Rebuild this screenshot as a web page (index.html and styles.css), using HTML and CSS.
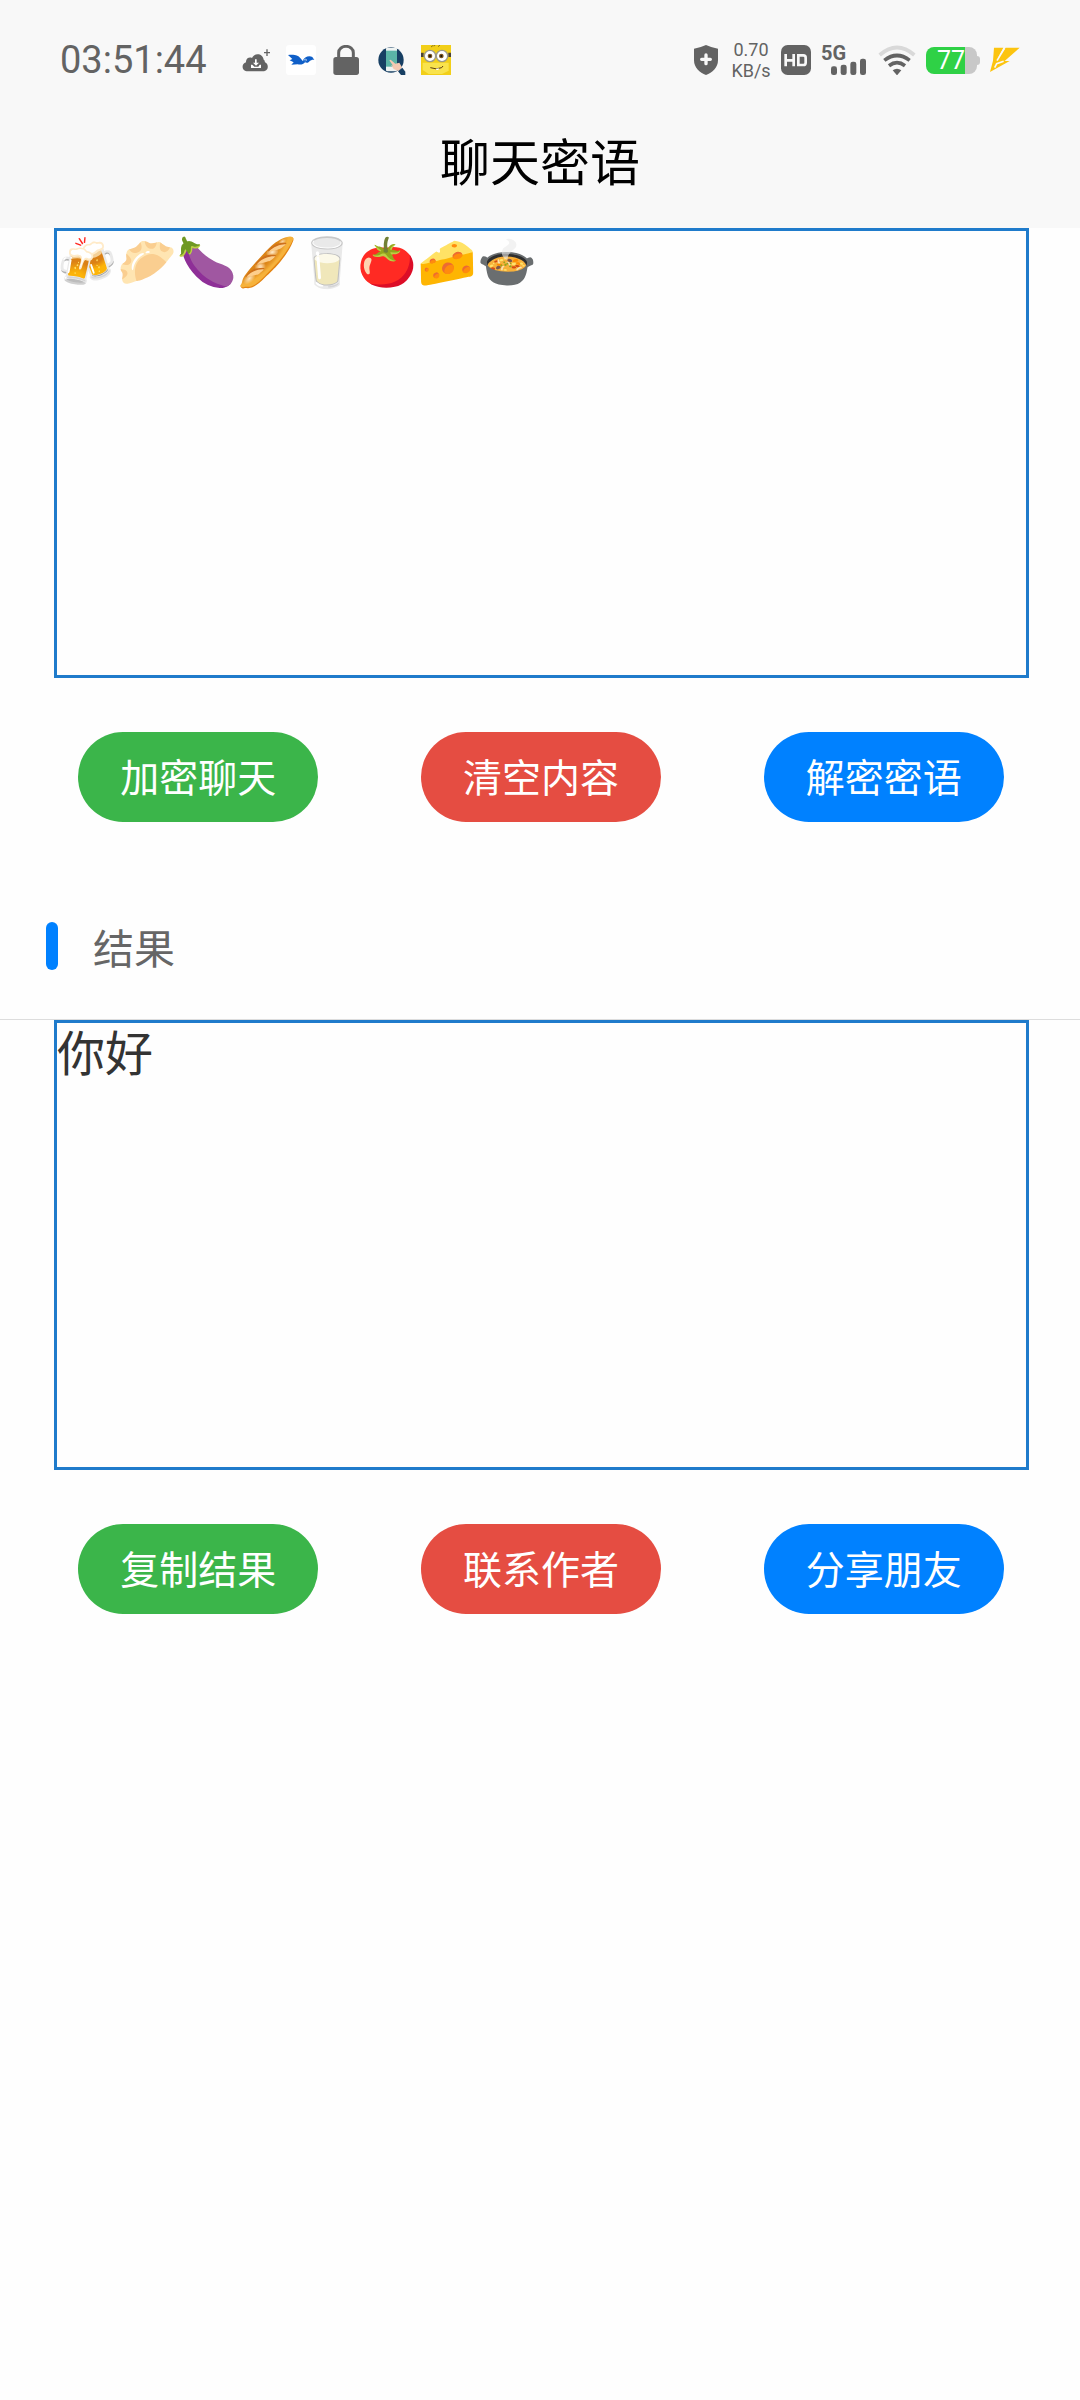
FILE: index.html
```
<!DOCTYPE html>
<html lang="zh-CN">
<head>
    <meta charset="UTF-8">
    <meta name="viewport" content="width=device-width, initial-scale=1.0">
    <title>聊天密语</title>
    <link rel="stylesheet" href="styles.css">
</head>
<body>
    <header>
        <div class="status-bar">
            <span class="clock">03:51:44</span>
            <div class="notices">
                <svg class="icon" viewBox="33 45 90 90">
                    <path fill="#636363" d="M54 124 C34 124 33 101 48 97 C47 85 58 80 66 84 C74 66 99 70 101 89 C105 90 104 95 105 97 C117 102 117 124 99 124 Z"/>
                    <path fill="#636363" d="M102 66 h7 v-8 h4 v8 h7 v4 h-7 v8 h-4 v-8 h-7 z"/>
                    <path fill="#fff" d="M75 88 h5 v10 h7 l-9 9 -9 -9 h6 z M63 104 h4 l6 6 h12 l4 -6 h4 v10 H63 z"/>
                </svg>
                <svg class="icon" viewBox="168 45 90 90">
                    <rect x="168" y="45" width="90" height="90" rx="10" fill="#fff"/>
                    <path fill="#0f5fc8" d="M174 75 C190 73 206 74 214 88 L218 93 C222 80 238 75 247 81 L253 90 C246 88 244 91 239 93 C236 99 230 99 225 97 C220 105 209 104 203 103 L184 104 L191 97 L179 91 L187 87 Z"/>
                    <path d="M221 91 l6 -4 3 3 -4 4" fill="none" stroke="#fff" stroke-width="2"/>
                </svg>
                <svg class="icon" viewBox="303 45 90 90">
                    <path d="M326 86 V68 a22 19 0 0 1 44 0 V86" fill="none" stroke="#636363" stroke-width="9"/>
                    <rect x="310" y="81" width="77" height="54" rx="8" fill="#636363"/>
                </svg>
                <svg class="icon" viewBox="438 45 90 90">
                    <circle cx="483" cy="90" r="38" fill="#173f63"/>
                    <rect x="468" y="53" width="33" height="71" rx="4" fill="#eef3f2"/>
                    <rect x="468" y="62" width="33" height="48" fill="#5bb5a7"/>
                    <path fill="#f3c9b2" d="M478 91 l4 -2 14 12 12 -3 8 14 -11 11 -14 -6 -8 -12 6 2 z"/>
                    <path fill="#173f63" d="M504 124 l13 -11 9 12 v10 h-13 z"/>
                </svg>
                <svg class="icon" viewBox="573 45 90 90">
                    <rect x="573" y="45" width="90" height="90" fill="#f2cf19"/>
                    <path fill="#f9e34d" d="M578 98 h78 v24 l-20 10 h-40 l-18 -12 z"/>
                    <path fill="#4b4436" d="M573 68 h8 v13 h-8 z M655 68 h8 v13 h-8 z"/>
                    <path d="M603 51 l8 -6 M612 49 l3 -4 M624 50 l6 -5" stroke="#5b4a12" stroke-width="2"/>
                    <circle cx="600" cy="78" r="17" fill="#fff" stroke="#9d9b88" stroke-width="4"/>
                    <circle cx="636" cy="78" r="17" fill="#fff" stroke="#9d9b88" stroke-width="4"/>
                    <circle cx="600" cy="78" r="7" fill="#7a5420"/>
                    <circle cx="634" cy="78" r="7" fill="#7a5420"/>
                    <circle cx="600" cy="78" r="3" fill="#111"/>
                    <circle cx="634" cy="78" r="3" fill="#111"/>
                    <path d="M601 113 q18 7 34 0 l4 -5" fill="none" stroke="#5d3d10" stroke-width="3"/>
                    <path d="M618 116 l9 -1 -2 5 h-6 z" fill="#fff"/>
                </svg>
            </div>
            <div class="system">
                <svg class="icon" viewBox="30 45 90 90">
                    <path fill="#636363" d="M75 45 Q92 53 111 56 V91 C111 113 94 128 75 135 C56 128 39 113 39 91 V56 Q58 53 75 45 Z"/>
                    <path d="M75 75 v26 M62 88 h26" stroke="#f8f8f8" stroke-width="10" stroke-linecap="round"/>
                </svg>
                <div class="speed"><span>0.70</span><span>KB/s</span></div>
                <svg class="icon" viewBox="300 45 90 90">
                    <rect x="300" y="45" width="90" height="90" rx="20" fill="#636363"/>
                    <path d="M314 72 V109 M338 72 V109 M314 91 H338 M352 76 V105 H367 Q374 105 374 98 V83 Q374 76 367 76 Z" fill="none" stroke="#f8f8f8" stroke-width="8"/>
                </svg>
                <div class="signal">
                    <span>5G</span>
                    <svg viewBox="0 0 105 51">
                        <g fill="#636363">
                            <rect x="0" y="25" width="18" height="26" rx="7"/>
                            <rect x="29" y="20" width="18" height="31" rx="7"/>
                            <rect x="58" y="11" width="18" height="40" rx="7"/>
                            <rect x="87" y="2" width="18" height="49" rx="7"/>
                        </g>
                    </svg>
                </div>
                <svg class="wifi" viewBox="54 45 114 90">
                    <g fill="none" stroke-width="11">
                        <path d="M59 75 Q111 30 163 75" stroke="#d9d9d9"/>
                        <path d="M73 91 Q111 62 149 91" stroke="#636363"/>
                        <path d="M87 107 Q111 89 135 107" stroke="#636363"/>
                    </g>
                    <path d="M98 121 Q111 112 124 121 L111 136 Z" fill="#636363"/>
                </svg>
                <div class="battery"><span>77</span></div>
                <svg class="icon" viewBox="390 45 90 90">
                    <path fill="#fcc40f" d="M402 53 H430 L414 83 L437 53 H479 L434 93 H449 L390 126 L399 92 Z"/>
                    <path d="M433 56 L411 92 M431 94 L410 101 L404 113" fill="none" stroke="#f8f8f8" stroke-width="5"/>
                </svg>
            </div>
        </div>
        <h1>聊天密语</h1>
    </header>
    <main>
        <textarea class="box" aria-label="内容" spellcheck="false">🍻🥟🍆🥖🥛🍅🧀🍲</textarea>
        <div class="buttons">
            <button type="button" class="green">加密聊天</button>
            <button type="button" class="red">清空内容</button>
            <button type="button" class="blue">解密密语</button>
        </div>
        <h2><label for="result">结果</label></h2>
        <textarea class="box" id="result" spellcheck="false">你好</textarea>
        <div class="buttons">
            <button type="button" class="green">复制结果</button>
            <button type="button" class="red">联系作者</button>
            <button type="button" class="blue">分享朋友</button>
        </div>
    </main>
</body>
</html>
```

FILE: styles.css
```
* {
    box-sizing: border-box;
}
body {
    margin: 0;
    background-color: #fefefe;
    font-family: Roboto, "Noto Sans CJK SC", sans-serif;
    color: #333;
}
header {
    background-color: #f8f8f8;
}
.status-bar {
    display: flex;
    align-items: center;
    height: 100px;
    padding: 20px 60px 0;
    color: #636363;
}
.clock {
    width: 181px;
    font-size: 38px;
}
.notices {
    display: flex;
    gap: 15px;
}
.icon {
    display: block;
    width: 30px;
    height: 30px;
}
.system {
    display: flex;
    align-items: center;
    gap: 10px;
    margin-left: auto;
}
.speed {
    display: flex;
    flex-direction: column;
    align-items: center;
    width: 40px;
    font-size: 18px;
    line-height: 21px;
}
.signal {
    display: flex;
    flex-direction: column;
    width: 47px;
    height: 34px;
    font-size: 20px;
    font-weight: 700;
    line-height: 20px;
}
.signal svg {
    width: 35px;
    height: 17px;
    margin: -5px 2px 0 auto;
}
.wifi {
    width: 38px;
    height: 30px;
}
.battery {
    position: relative;
    width: 51px;
    height: 27px;
    margin-right: 3px;
    padding-left: 11px;
    border-radius: 8px;
    background: linear-gradient(to right, #2fd146 39px, #c8c8c8 39px);
    color: #fff;
    font-size: 25px;
    line-height: 27px;
}
.battery::after {
    content: '';
    position: absolute;
    top: 9px;
    right: -3px;
    width: 3px;
    height: 9px;
    border-radius: 0 3px 3px 0;
    background-color: #c8c8c8;
}
h1 {
    margin: 0;
    font-size: 50px;
    font-weight: 400;
    line-height: 128px;
    text-align: center;
    color: #000;
}
.box {
    display: block;
    width: calc(100% - 105px);
    height: 450px;
    margin: 0 51px 0 54px;
    padding: 0;
    border: 3px solid #1f7bcb;
    border-radius: 0;
    outline: none;
    resize: none;
    background-color: #fefefe;
    color: #333;
    font-family: inherit;
    font-size: 48px;
    line-height: 64px;
}
.buttons {
    display: flex;
    justify-content: space-around;
    padding: 54px 25px 54px 27px;
}
button {
    width: 240px;
    height: 90px;
    padding: 0 0 4px;
    border: none;
    border-radius: 45px;
    color: #fff;
    font-family: inherit;
    font-size: 39px;
    cursor: pointer;
}
.green {
    background-color: #3bb54a;
}
.red {
    background-color: #e54d42;
}
.blue {
    background-color: #0081ff;
}
h2 {
    display: flex;
    align-items: center;
    gap: 35px;
    height: 144px;
    margin: 0;
    padding: 0 46px 3px;
    border-bottom: 1px solid #ddd;
    color: #666;
    font-size: 41px;
    font-weight: 400;
}
h2::before {
    content: '';
    width: 12px;
    height: 48px;
    border-radius: 6px;
    background-color: #0081ff;
}
```
